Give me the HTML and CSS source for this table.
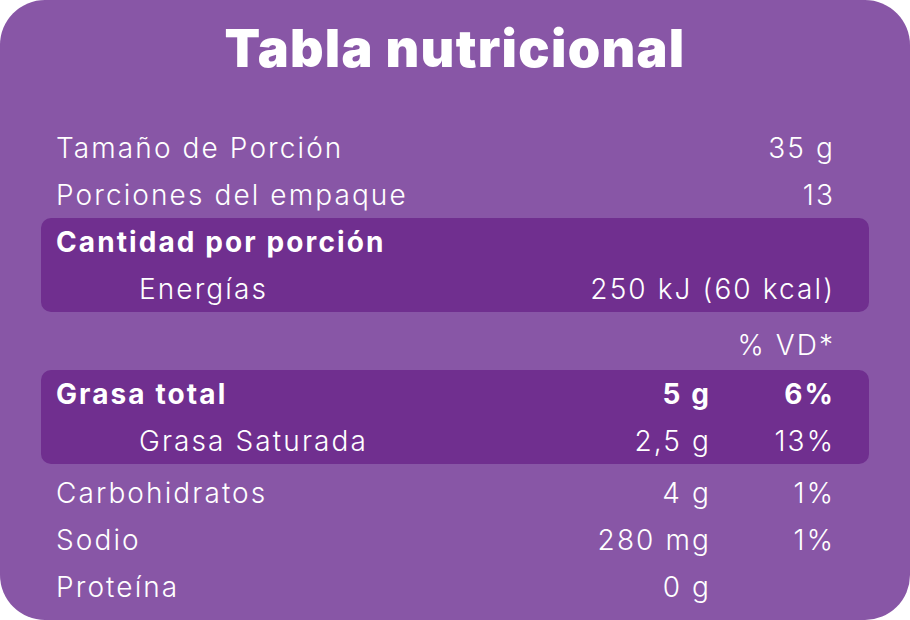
FILE: index.html
```html
<!DOCTYPE html>
<html lang="es">
<head>
<meta charset="utf-8">
<title>Tabla nutricional</title>
<link rel="stylesheet" href="styles.css">
</head>
<body>
<div class="card">
  <h1 class="title">Tabla nutricional</h1>
  <div class="table">
    <div class="row two first"><span>Tamaño de Porción</span><span class="num">35 g</span></div>
    <div class="row two"><span>Porciones del empaque</span><span class="num">13</span></div>
    <div class="box">
      <div class="row two"><span class="bold">Cantidad por porción</span><span></span></div>
      <div class="row two"><span class="indent">Energías</span><span class="num">250 kJ (60 kcal)</span></div>
    </div>
    <div class="row two vd"><span></span><span class="num">% VD*</span></div>
    <div class="box">
      <div class="row three bold"><span>Grasa total</span><span class="num">5 g</span><span class="num">6%</span></div>
      <div class="row three"><span class="indent">Grasa Saturada</span><span class="num">2,5 g</span><span class="num">13%</span></div>
    </div>
    <div class="row three after"><span>Carbohidratos</span><span class="num">4 g</span><span class="num">1%</span></div>
    <div class="row three"><span>Sodio</span><span class="num">280 mg</span><span class="num">1%</span></div>
    <div class="row three"><span>Proteína</span><span class="num">0 g</span><span class="num"></span></div>
  </div>
</div>
</body>
</html>
```

FILE: styles.css
```css
html, body {
  margin: 0;
  padding: 0;
  background: #ffffff;
}

.card {
  width: 910px;
  height: 620px;
  box-sizing: border-box;
  border-radius: 45px;
  background: #8856a6;
  color: #ffffff;
  font-family: "Inter", "Open Sans", sans-serif;
  font-weight: 300;
  overflow: hidden;
}

.title {
  margin: 0;
  padding-top: 17px;
  height: 106px;
  box-sizing: border-box;
  text-align: center;
  font-size: 52px;
  font-weight: 900;
  letter-spacing: 1.3px;
  line-height: 64px;
}

.table {
  padding: 18px 41px 0 41px;
  display: flex;
  flex-direction: column;
}

.row {
  display: grid;
  align-items: center;
  height: 47px;
  padding: 0 36px 0 15px;
  font-size: 28px;
  letter-spacing: 2.1px;
  white-space: nowrap;
}

.two {
  grid-template-columns: 1fr auto;
}

.three {
  grid-template-columns: 1fr auto 124px;
}

.num {
  text-align: right;
  margin-right: -2px;
}

.bold {
  font-weight: 700;
}

.indent {
  padding-left: 83px;
}

.box {
  background: #702f8f;
  border-radius: 10px;
}

.vd {
  margin-top: 9px;
  margin-bottom: 2px;
}

.after {
  margin-top: 5px;
}
```
